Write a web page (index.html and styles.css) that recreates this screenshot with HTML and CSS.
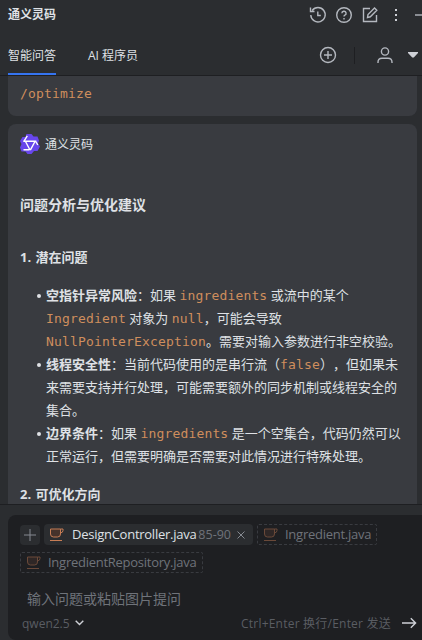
FILE: index.html
```html
<!DOCTYPE html>
<html lang="zh-CN">
<head>
    <meta charset="UTF-8">
    <meta name="viewport" content="width=device-width, initial-scale=1.0">
    <title>通义灵码</title>
    <link rel="stylesheet" href="styles.css">
</head>
<body>

    <svg class="defs" width="0" height="0">
        <symbol id="cup" viewBox="0 0 16 14">
            <path d="M1.500 1h10v5a3 3 0 0 1-3 3h-4a3 3 0 0 1-3-3z" fill="#45322b" stroke="#c77d55"/>
            <path d="M11.500 1h2.500v1.500q0 2-2.500 2.500M1 12.500h12" fill="none" stroke="#c77d55"/>
        </symbol>
    </svg>

    <div class="app">
        <header class="titlebar">
            <h1>通义灵码</h1>
            <div class="actions">
                <svg width="18" height="18" viewBox="0 0 18 18"><path d="M3.200 4.500A7.200 7.200 0 1 1 1.800 9M1.500 1.500v4h4M8.800 5.500v4h3"/></svg>
                <svg width="18" height="18" viewBox="0 0 18 18"><circle cx="9" cy="9" r="7.300"/><path d="M6.900 7.300a2.100 2 0 1 1 3 1.800q-.9.4-.9 1.500M9 11.900v1.500"/></svg>
                <svg width="18" height="18" viewBox="0 0 18 18"><path d="M9 2.500H2.500v13h13V9M6.500 11.500l.5-3 6.500-6.500 2.300 2.300-6.500 6.500z"/></svg>
                <svg width="18" height="18" viewBox="0 0 18 18"><path class="dots" d="M8 3h2v2H8zM8 8h2v2H8zM8 13h2v2H8z"/></svg>
                <svg width="18" height="18" viewBox="0 0 18 18"><path d="M2 9h14"/></svg>
            </div>
        </header>

        <nav class="tabs">
            <a class="tab active">智能问答</a>
            <a class="tab">AI 程序员</a>
            <div class="tools">
                <svg width="18" height="18" viewBox="0 0 18 18"><circle cx="9" cy="9" r="7.500"/><path d="M9 5v8M5 9h8"/></svg>
                <span class="divider"></span>
                <svg class="user" width="18" height="18" viewBox="0 0 18 18"><circle cx="9" cy="5.500" r="3.600"/><path d="M2 17v-.8q0-4 4-4h6q4 0 4 4v.8"/></svg>
                <svg class="caret" width="10" height="6" viewBox="0 0 10 6"><path d="M0 0h10v1L5.800 5.500H4.200L0 1z"/></svg>
            </div>
        </nav>

        <main class="chat">
            <div class="card question"><code>/optimize</code></div>
            <div class="card answer">
                <div class="author">
                    <svg width="20" height="20" viewBox="0 0 20 20">
                        <path d="M6.500 0h5l2 2.500h4l1.500 4-1 3 2 3-2.500 4.500h-3.500l-2.500 3H7.500l-2-2.500h-4L0 13.500l1.500-3.500L0 7l2.500-4h3z" fill="#6846ec"/>
                        <path d="M7.300 1.800L4 7.200M3.300 7.200h13M5.500 7.500l4.500 8.500M3.500 15.700h6M15 7.500l-4.700 8.700M15.500 7l2.300 4" fill="none" stroke="#fff" stroke-width="1.400"/>
                    </svg>
                    <span>通义灵码</span>
                </div>
                <h2>问题分析与优化建议</h2>
                <h3>1. 潜在问题</h3>
                <ul>
                    <li><b>空指针异常风险</b>：如果 <code>ingredients</code> 或流中的某个<br><code>Ingredient</code> 对象为 <code>null</code>，可能会导致<br><code>NullPointerException</code>。需要对输入参数进行非空校验。</li>
                    <li><b>线程安全性</b>：当前代码使用的是串行流（<code>false</code>），但如果未<br>来需要支持并行处理，可能需要额外的同步机制或线程安全的<br>集合。</li>
                    <li><b>边界条件</b>：如果 <code>ingredients</code> 是一个空集合，代码仍然可以<br>正常运行，但需要明确是否需要对此情况进行特殊处理。</li>
                </ul>
                <h3>2. 可优化方向</h3>
            </div>
        </main>

        <footer class="composer-area">
            <div class="composer">
                <div class="files">
                    <span class="add"><svg width="12" height="12" viewBox="0 0 12 12"><path d="M6 0v12M0 6h12"/></svg></span>
                    <span class="chip current"><svg width="16" height="14"><use href="#cup"/></svg><span class="name">DesignController.java</span><span class="range">85-90</span><svg class="close" width="8" height="8" viewBox="0 0 8 8"><path d="M.5.5l7 7M7.500.5l-7 7"/></svg></span>
                    <span class="chip suggested ingredient"><svg width="16" height="14"><use href="#cup"/></svg><span class="name">Ingredient.java</span></span>
                    <span class="chip suggested repository"><svg width="16" height="14"><use href="#cup"/></svg><span class="name">IngredientRepository.java</span></span>
                </div>
                <div class="placeholder">输入问题或粘贴图片提问</div>
                <div class="bottom">
                    <span class="model">qwen2.5</span>
                    <svg class="chevron" width="9" height="6" viewBox="0 0 9 6"><path d="M.7.7l3.800 3.800L8.300.7"/></svg>
                    <span class="hint">Ctrl+Enter 换行/Enter 发送</span>
                    <svg class="send" width="15" height="12" viewBox="0 0 15 12"><path d="M0 6h13.500M8.800 1.200L13.600 6l-4.800 4.800"/></svg>
                </div>
            </div>
        </footer>
    </div>

</body>
</html>
```
FILE: styles.css
```css
* { box-sizing: border-box; }
body { margin: 0; background: #2b2d30; color: #dfe1e5; font: 12px "Open Sans", "Noto Sans CJK SC", sans-serif; text-spacing-trim: space-all; overflow: hidden; }
h1, h2, h3, ul { margin: 0; padding: 0; }
svg { display: block; flex: none; }
.defs { position: absolute; }
.app { width: 422px; height: 640px; display: flex; flex-direction: column; white-space: nowrap; overflow: hidden; }

.titlebar { height: 29px; flex: none; display: flex; align-items: center; padding-left: 8px; }
.titlebar h1 { font-size: 12px; line-height: 18px; }
.actions { display: flex; gap: 8px; margin-left: 253px; }
.actions svg, .tools svg { fill: none; stroke: #b4b8bf; stroke-width: 1.4; }
.actions .dots { fill: #ced0d6; stroke: none; }

.tabs { height: 47px; flex: none; display: flex; padding-left: 8px; border-bottom: 1px solid #1e1f22; }
.tab { line-height: 53px; height: 46px; margin-right: 32px; }
.active { border-bottom: 2px solid #3574f0; }
.tools { display: flex; align-items: center; margin: 6px 4px 0 auto; }
.divider { width: 1px; height: 17px; background: #1e1f22; margin: 0 21px 0 17px; }
.tools .caret { margin-left: 14px; fill: #ced0d6; stroke: none; }

.chat { height: 428px; flex: none; padding: 0 5px 0 8px; overflow: hidden; }
.card { background: #393b40; padding: 0 12px; }
code { font: 13px "DejaVu Sans Mono", monospace; letter-spacing: .17px; color: #cf8e5d; }
.question { height: 40px; border-radius: 0 0 8px 8px; line-height: 35px; margin-bottom: 8px; }
.answer { height: 400px; border-radius: 8px; padding-top: 10px; font-size: 13px; line-height: 23px; }
.author { display: flex; align-items: center; gap: 5px; height: 20px; font-size: 12px; }
h2 { font-size: 14px; line-height: 24px; margin-top: 39px; }
h3 { font-size: 13px; line-height: 23px; margin-top: 29px; word-spacing: 1px; }
ul { list-style: none; padding-left: 26px; margin-top: 15px; }
li { position: relative; }
li::before { content: ""; position: absolute; left: -9px; top: 10px; width: 4px; height: 4px; border-radius: 50%; background: #dfe1e5; }
li code { line-height: 1; }
ul + h3 { margin-top: 15px; }

.composer-area { flex: 1; border-top: 1px solid #1e1f22; padding: 10px 0 0 8px; }
.composer { height: 125px; background: #1e1f22; border-radius: 8px 0 0 8px; padding: 9px 5px 0 12px; color: #6f737a; }
.files { display: flex; flex-wrap: wrap; gap: 7px 4px; font-size: 13px; }
.add { width: 20px; height: 20px; margin-top: 1px; border-radius: 4px; background: #2b2d30; display: flex; align-items: center; justify-content: center; }
.add svg, .close { fill: none; stroke: #868a91; }
.chip { height: 21px; display: flex; align-items: center; line-height: 21px; border-radius: 4px; padding-left: 5px; }
.chip .name { letter-spacing: -.26px; }
.current { width: 209px; background: #2b2d30; }
.current .name { color: #dfe1e5; margin-left: 7px; }
.range { font-size: 12.5px; margin-left: 2px; }
.close { margin-left: 6px; }
.suggested { border: 1px dashed #393b40; border-radius: 2px; line-height: 19px; }
.suggested svg { opacity: .45; }
.suggested .name { margin-left: 6px; }
.ingredient { width: 120px; }
.repository { width: 183px; }
.placeholder { font-size: 14px; line-height: 22px; margin: 15px 0 0 7px; }
.bottom { display: flex; align-items: center; height: 20px; margin-top: 3px; padding-left: 2px; color: #5a5d63; }
.chevron { margin-left: 5px; }
.chevron, .send { fill: none; stroke: #ced0d6; stroke-width: 1.4; }
.hint { margin-left: auto; letter-spacing: .22px; }
.send { margin-left: 11px; }
```
